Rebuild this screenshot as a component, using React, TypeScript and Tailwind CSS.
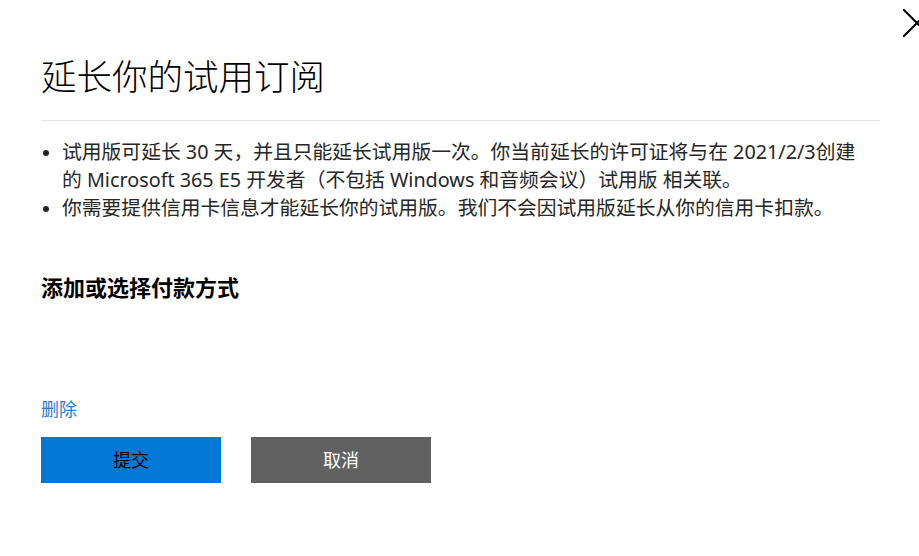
const font = { fontFamily: '"Noto Sans", "Noto Sans CJK SC", sans-serif' };

const bullets = [
  "试用版可延长 30 天，并且只能延长试用版一次。你当前延长的许可证将与在 2021/2/3创建的 Microsoft 365 E5 开发者（不包括 Windows 和音频会议）试用版 相关联。",
  "你需要提供信用卡信息才能延长你的试用版。我们不会因试用版延长从你的信用卡扣款。",
];

const App = () => {
  return (
    <div
      className="relative w-[919px] h-[556px] overflow-hidden bg-white pl-[41px] pr-[39px] text-black"
      style={font}
    >
      <button className="absolute left-[903px] top-[9px] w-[28px] h-[28px]" aria-label="关闭">
        <svg viewBox="0 0 28 28" className="w-[28px] h-[28px]" fill="none" stroke="#000" strokeWidth="2">
          <path d="M0 0 L28 28 M28 0 L0 28" />
        </svg>
      </button>

      <h1 className="pt-[55px] text-[35.5px] leading-[42px] font-light">延长你的试用订阅</h1>
      <div className="mt-[23px] border-t border-[#e6e6e6]" />

      <ul className="mt-[17px] text-[19.8px] leading-[28px] text-[#262626]">
        {bullets.map((b) => (
          <li key={b} className="flex">
            <span className="w-[21px] shrink-0 flex justify-start pt-[12px] pl-[2px]">
              <span className="block w-[6px] h-[6px] rounded-full bg-[#262626]" />
            </span>
            <span className="w-[805px]">{b}</span>
          </li>
        ))}
      </ul>

      <h2 className="mt-[50px] text-[22px] leading-[30px] font-bold">添加或选择付款方式</h2>

      <a className="block mt-[94px] text-[18px] leading-[26px] text-[#2f7bce] w-fit">删除</a>

      <div className="mt-[15px] flex gap-[30px]">
        <button className="w-[180px] h-[46px] bg-[#0078d4] text-[18px] text-black">提交</button>
        <button className="w-[180px] h-[46px] bg-[#616161] text-[18px] text-white">取消</button>
      </div>
    </div>
  );
};

export default App;
